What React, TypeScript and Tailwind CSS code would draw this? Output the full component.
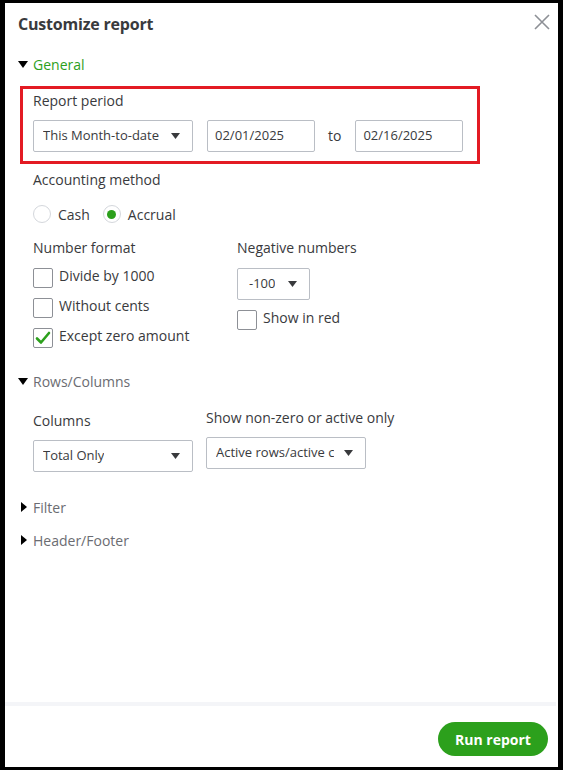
import React from "react";

const font = { fontFamily: '"Open Sans", "Liberation Sans", sans-serif' };

function Caret() {
  return (
    <svg width="9" height="6" viewBox="0 0 9 6" className="shrink-0">
      <path d="M0 0 L9 0 L4.5 6 Z" fill="#393a3d" />
    </svg>
  );
}

function TriDown() {
  return (
    <svg width="10" height="7" viewBox="0 0 10 7" className="shrink-0">
      <path d="M0 0 L10 0 L5 7 Z" fill="#000" />
    </svg>
  );
}

function TriRight() {
  return (
    <svg width="6" height="10" viewBox="0 0 6 10" className="shrink-0">
      <path d="M0 0 L6 5 L0 10 Z" fill="#000" />
    </svg>
  );
}

function Select({ text, w, pl = "pl-[9px]", clip = "" }: { text: string; w: string; pl?: string; clip?: string }) {
  return (
    <div
      className={`${w} h-[32px] border border-[#babec5] rounded-[2px] flex items-center justify-between ${pl} pr-[12px] text-[13px] text-[#393a3d] bg-white`}
    >
      <span className={`block whitespace-nowrap overflow-hidden ${clip}`}>{text}</span>
      <Caret />
    </div>
  );
}

function Checkbox({ checked = false }: { checked?: boolean }) {
  return (
    <div className="w-[20px] h-[20px] border border-[#8d9096] rounded-[2px] bg-white flex items-center justify-center shrink-0">
      {checked && (
        <svg width="16" height="14" viewBox="0 0 16 14">
          <path d="M2 7.5 L6 11.5 L14 2" stroke="#2ca01c" strokeWidth="2.6" fill="none" strokeLinecap="round" strokeLinejoin="round" />
        </svg>
      )}
    </div>
  );
}

function CheckRow({ label, checked }: { label: string; checked?: boolean }) {
  return (
    <div className="flex items-center gap-[6px] h-[21px]">
      <Checkbox checked={checked} />
      <span className="text-[14px] text-[#393a3d] leading-[20px] -mt-[3px]">{label}</span>
    </div>
  );
}

function Radio({ checked = false }: { checked?: boolean }) {
  return (
    <div className="w-[18px] h-[18px] rounded-full border border-[#d4d7dc] bg-white flex items-center justify-center shrink-0">
      {checked && <div className="w-[9px] h-[9px] rounded-full bg-[#2ca01c]" />}
    </div>
  );
}

function DateBox({ text }: { text: string }) {
  return (
    <div className="w-[108px] h-[32px] border border-[#babec5] rounded-[2px] flex items-center pl-[7px] text-[13px] text-[#393a3d]">
      {text}
    </div>
  );
}

export default function App() {
  return (
    <div
      style={font}
      className="w-[563px] h-[770px] bg-white border-black border-l-[5px] border-r-[5px] border-t-[3px] border-b-[3px] flex flex-col text-[#393a3d]"
    >
      <div className="flex-1 pl-[13px] pr-[5px]">
        {/* Title */}
        <div className="flex items-center justify-between h-[24px] mt-[9px]">
          <div className="text-[16px] font-bold text-[#393a3d] leading-[24px] tracking-[-0.2px]">Customize report</div>
          <svg width="16" height="16" viewBox="0 0 16 16" className="mr-[3px] -mt-[4px]">
            <path d="M1 1 L15 15 M15 1 L1 15" stroke="#8d9096" strokeWidth="1.6" />
          </svg>
        </div>

        {/* General */}
        <div className="flex items-center gap-[5px] mt-[18px] h-[20px]">
          <TriDown />
          <span className="text-[14px] text-[#2ca01c]">General</span>
        </div>

        {/* Report period box */}
        <div className="ml-[2px] mt-[12px] w-[460px] border-[3px] border-[#e31b23] pl-[10px] pt-[2px] pb-[9px]">
          <div className="text-[14px] leading-[20px]">Report period</div>
          <div className="flex items-center mt-[9px]">
            <Select text="This Month-to-date" w="w-[160px]" />
            <div className="ml-[14px]">
              <DateBox text="02/01/2025" />
            </div>
            <span className="text-[14px] ml-[13px] mr-[14px] -mt-[2px]">to</span>
            <DateBox text="02/16/2025" />
          </div>
        </div>

        <div className="pl-[15px]">
          {/* Accounting method */}
          <div className="text-[14px] leading-[20px] mt-[6px]">Accounting method</div>
          <div className="flex items-center mt-[14px] h-[20px]">
            <Radio />
            <span className="text-[14px] ml-[7px]">Cash</span>
            <div className="ml-[13px]">
              <Radio checked />
            </div>
            <span className="text-[14px] ml-[7px]">Accrual</span>
          </div>

          {/* Number format / Negative numbers */}
          <div className="flex mt-[14px]">
            <div className="w-[204px]">
              <div className="text-[14px] leading-[20px]">Number format</div>
              <div className="flex flex-col gap-[9px] mt-[9px]">
                <CheckRow label="Divide by 1000" />
                <CheckRow label="Without cents" />
                <CheckRow label="Except zero amount" checked />
              </div>
            </div>
            <div>
              <div className="text-[14px] leading-[20px]">Negative numbers</div>
              <div className="mt-[10px]">
                <Select text="-100" w="w-[73px]" pl="pl-[11px]" />
              </div>
              <div className="mt-[9px]">
                <CheckRow label="Show in red" />
              </div>
            </div>
          </div>
        </div>

        {/* Rows/Columns */}
        <div className="flex items-center gap-[5px] mt-[23px] h-[20px]">
          <TriDown />
          <span className="text-[14px] text-[#6b6c72]">Rows/Columns</span>
        </div>
        <div className="flex pl-[15px] mt-[17px]">
          <div className="w-[173px]">
            <div className="text-[14px] leading-[20px] mt-[3px]">Columns</div>
            <div className="mt-[9px]">
              <Select text="Total Only" w="w-[160px]" />
            </div>
          </div>
          <div>
            <div className="text-[14px] leading-[20px]">Show non-zero or active only</div>
            <div className="mt-[9px]">
              <Select text="Active rows/active columns" w="w-[160px]" clip="w-[118px]" />
            </div>
          </div>
        </div>

        {/* Filter */}
        <div className="flex items-center gap-[6px] mt-[25px] h-[20px] pl-[3px]">
          <TriRight />
          <span className="text-[14px] text-[#6b6c72]">Filter</span>
        </div>
        <div className="flex items-center gap-[6px] mt-[13px] h-[20px] pl-[3px]">
          <TriRight />
          <span className="text-[14px] text-[#6b6c72]">Header/Footer</span>
        </div>
      </div>

      {/* Footer */}
      <div className="h-[4px] bg-[#f4f5f8] mr-[2px]" />
      <div className="flex justify-end pr-[10px] pt-[16px] pb-[11px]">
        <button className="h-[34px] w-[110px] rounded-full bg-[#2ca01c] text-white text-[14px] font-bold">
          Run report
        </button>
      </div>
    </div>
  );
}
